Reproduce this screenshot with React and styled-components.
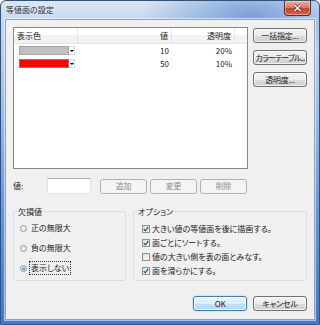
import styled, { createGlobalStyle } from "styled-components";

const textColor = "#1a1a1a";
const disabledText = "#8b8b8b";
const faceColor = "#f0f0f0";
const groupBorder = "#d5dfe5";

const GlobalStyle = createGlobalStyle`
  html, body { margin: 0; padding: 0; background: #ffffff; }
  body {
    font-family: "Noto Sans CJK JP", "Liberation Sans", sans-serif;
    font-size: 8px;
    font-feature-settings: "palt";
    color: ${textColor};
  }
  * { box-sizing: border-box; }
`;

const Window = styled.div`
  width: 320px;
  height: 325px;
  border: 1px solid #30527f;
  border-radius: 6px 6px 0 0;
  padding: 0 4px 4px;
  display: flex;
  flex-direction: column;
  background:
    radial-gradient(ellipse 110px 45px at 250px 14px, rgba(70, 120, 200, 0.6), rgba(70, 120, 200, 0) 100%),
    linear-gradient(to bottom, #dbe6f3 0, #c6d7ec 20px, #a9c4e6 90px, #6e98d6 200px, #4577c8 100%);
`;

const TitleBar = styled.div`
  height: 18px;
  display: flex;
  justify-content: space-between;
  align-items: flex-start;
  padding: 0 4px 0 1px;
`;

const Caption = styled.span`
  margin-top: 4px;
  font-size: 8px;
  line-height: 10px;
  color: #1e2a3a;
  text-shadow: 0 0 4px rgba(255, 255, 255, 0.9);
`;

const CloseButton = styled.div`
  width: 27px;
  height: 15px;
  border: 1px solid #6d2a22;
  border-top: none;
  border-radius: 0 0 4px 4px;
  background: linear-gradient(to bottom, #e9a99c 0, #d9806f 45%, #c2412c 55%, #cf6a4d 100%);
  box-shadow: inset 0 0 0 1px rgba(255, 255, 255, 0.35);
  display: flex;
  align-items: center;
  justify-content: center;
`;

const Client = styled.div`
  flex: 1;
  background: ${faceColor};
  border: 1px solid #8ea3bf;
  box-shadow: 0 0 0 1px rgba(255, 255, 255, 0.55);
  padding: 7px 7px 0;
  display: flex;
  flex-direction: column;
`;

const TopSection = styled.div`
  display: flex;
  gap: 5px;
`;

const ListBox = styled.div`
  width: 235px;
  height: 142px;
  border: 1px solid #828790;
  background: #ffffff;
`;

const cols = "64px 94px 63px 1fr";

const HeaderRow = styled.div`
  display: grid;
  grid-template-columns: ${cols};
  height: 16px;
  background: linear-gradient(to bottom, #ffffff 0, #ffffff 50%, #f3f4f6 50%, #eef0f3 100%);
  border-bottom: 1px solid #e4e6ea;
`;

const HeaderCell = styled.div`
  display: flex;
  align-items: center;
  justify-content: ${(p) => (p.$right ? "flex-end" : "flex-start")};
  padding: 0 3px;
  border-right: ${(p) => (p.$last ? "none" : "1px solid #e3e5e8")};
  line-height: 10px;
`;

const DataRow = styled.div`
  display: grid;
  grid-template-columns: ${cols};
  height: 13px;
`;

const Cell = styled.div`
  display: flex;
  align-items: center;
  justify-content: ${(p) => (p.$right ? "flex-end" : "flex-start")};
  padding: ${(p) => (p.$right ? "0 3px 0 0" : "0 0 0 5px")};
  line-height: 10px;
`;

const ColorPicker = styled.div`
  display: flex;
  height: 9px;
  width: 56px;
`;

const Swatch = styled.div`
  flex: 1;
  background: ${(p) => p.$color};
  border: 1px solid ${(p) => p.$border};
`;

const DropArrow = styled.div`
  width: 6px;
  background: #ffffff;
  border: 1px solid #d8d8d8;
  border-left: none;
  display: flex;
  align-items: center;
  justify-content: center;
  &::after {
    content: "";
    border-left: 2px solid transparent;
    border-right: 2px solid transparent;
    border-top: 2px solid #000;
  }
`;

const SideButtons = styled.div`
  display: flex;
  flex-direction: column;
  gap: 7px;
  margin-top: 1px;
`;

const Button = styled.button`
  width: ${(p) => p.$w || 54}px;
  height: 15px;
  padding: 0;
  font: inherit;
  line-height: 10px;
  white-space: nowrap;
  overflow: hidden;
  letter-spacing: ${(p) => (p.$tight ? "-0.9px" : "-0.2px")};
  color: ${textColor};
  border: 1px solid #707070;
  border-radius: 3px;
  background: linear-gradient(to bottom, #f2f2f2 0, #ebebeb 50%, #dddddd 50%, #cfcfcf 100%);
  box-shadow: inset 0 0 0 1px rgba(255, 255, 255, 0.7);
  &:disabled {
    color: ${disabledText};
    border-color: #adb2b5;
    background: #f4f4f4;
    box-shadow: none;
  }
`;

const DefaultButton = styled(Button)`
  border-color: #3c7fb1;
  background: linear-gradient(to bottom, #eaf6fd 0, #d9f0fc 50%, #bee6fd 50%, #a7d9f5 100%);
  box-shadow: inset 0 0 0 1px rgba(255, 255, 255, 0.8), 0 0 2px rgba(60, 127, 177, 0.4);
`;

const ValueRow = styled.div`
  display: flex;
  align-items: center;
  margin-top: 9px;
  height: 16px;
`;

const ValueLabel = styled.span`
  width: 34px;
  line-height: 10px;
`;

const ValueInput = styled.div`
  width: 44px;
  height: 16px;
  background: #ffffff;
  border: 1px solid #e2e3ea;
  border-top-color: #abadb3;
  margin-right: 9px;
`;

const ActionButtons = styled.div`
  display: flex;
  gap: 3px;
`;

const GroupRow = styled.div`
  display: flex;
  gap: 7px;
  margin-top: 12px;
`;

const Group = styled.fieldset`
  margin: 0;
  width: ${(p) => p.$w}px;
  min-width: 0;
  border: 1px solid ${groupBorder};
  border-radius: 3px;
  padding: ${(p) => p.$pad};
  display: flex;
  flex-direction: column;
  gap: ${(p) => p.$gap}px;
`;

const Legend = styled.legend`
  padding: 0 1px;
  margin-left: ${(p) => p.$shift}px;
  line-height: 11px;
`;

const OptionRow = styled.label`
  display: flex;
  align-items: center;
  gap: ${(p) => p.$gap}px;
  height: 12px;
  line-height: 10px;
  white-space: nowrap;
`;

const Radio = styled.span`
  width: 7px;
  height: 7px;
  border-radius: 50%;
  border: 1px solid #9a9a9a;
  background: radial-gradient(circle at 50% 50%, #f6f6f6 0, #dcdcdc 100%);
  display: flex;
  align-items: center;
  justify-content: center;
  &::after {
    content: "";
    width: 3px;
    height: 3px;
    border-radius: 50%;
    background: ${(p) => (p.$on ? "radial-gradient(circle at 40% 35%, #8fd0f7, #1a5fa8)" : "transparent")};
  }
`;

const FocusText = styled.span`
  outline: ${(p) => (p.$focus ? "1px dotted #333" : "none")};
  outline-offset: 1px;
`;

const CheckBox = styled.span`
  width: 8px;
  height: 8px;
  border: 1px solid #8f8f8f;
  background: linear-gradient(135deg, #dcdcdc, #fafafa);
  display: flex;
  align-items: center;
  justify-content: center;
`;

const Footer = styled.div`
  display: flex;
  justify-content: flex-end;
  gap: 6px;
  margin-top: 15px;
`;

const Check = () => (
  <svg width="6" height="6" viewBox="0 0 6 6">
    <path d="M0.8 3.2 L2.3 4.8 L5.3 0.8" fill="none" stroke="#1d4f91" strokeWidth="1.2" />
  </svg>
);

const rows = [
  { color: "#c0c0c0", border: "#a8a8a8", value: 10, alpha: "20%" },
  { color: "#ff0000", border: "#c86060", value: 50, alpha: "10%" },
];

const radios = [
  { label: "正の無限大" },
  { label: "負の無限大" },
  { label: "表示しない", on: true },
];

const options = [
  { label: "大きい値の等値面を後に描画する。", on: true },
  { label: "面ごとにソートする。", on: true },
  { label: "値の大きい側を表の面とみなす。", on: false },
  { label: "面を滑らかにする。", on: true },
];

const App = () => {
  return (
    <>
      <GlobalStyle />
      <Window>
        <TitleBar>
          <Caption>等値面の設定</Caption>
          <CloseButton>
            <svg width="9" height="8" viewBox="0 0 9 8">
              <path d="M1.5 1 L7.5 7 M7.5 1 L1.5 7" stroke="#5a1d15" strokeWidth="2.6" />
              <path d="M1.5 1 L7.5 7 M7.5 1 L1.5 7" stroke="#ffffff" strokeWidth="1.5" />
            </svg>
          </CloseButton>
        </TitleBar>
        <Client>
          <TopSection>
            <ListBox>
              <HeaderRow>
                <HeaderCell>表示色</HeaderCell>
                <HeaderCell $right>値</HeaderCell>
                <HeaderCell $right>透明度</HeaderCell>
                <HeaderCell $last />
              </HeaderRow>
              {rows.map((r) => (
                <DataRow key={r.value}>
                  <Cell>
                    <ColorPicker>
                      <Swatch $color={r.color} $border={r.border} />
                      <DropArrow />
                    </ColorPicker>
                  </Cell>
                  <Cell $right>{r.value}</Cell>
                  <Cell $right>{r.alpha}</Cell>
                  <Cell />
                </DataRow>
              ))}
            </ListBox>
            <SideButtons>
              <Button>一括指定...</Button>
              <Button $tight>カラーテーブル...</Button>
              <Button>透明度...</Button>
            </SideButtons>
          </TopSection>

          <ValueRow>
            <ValueLabel>値:</ValueLabel>
            <ValueInput />
            <ActionButtons>
              <Button $w={47} disabled>追加</Button>
              <Button $w={47} disabled>変更</Button>
              <Button $w={47} disabled>削除</Button>
            </ActionButtons>
          </ValueRow>

          <GroupRow>
            <Group $w={113} $pad="5px 6px 6px" $gap={8}>
              <Legend $shift={-3}>欠損値</Legend>
              {radios.map((r) => (
                <OptionRow key={r.label} $gap={4}>
                  <Radio $on={r.on} />
                  <FocusText $focus={r.on}>{r.label}</FocusText>
                </OptionRow>
              ))}
            </Group>
            <Group $w={174} $pad="6px 8px 3px" $gap={2}>
              <Legend $shift={-5}>オプション</Legend>
              {options.map((o) => (
                <OptionRow key={o.label} $gap={2}>
                  <CheckBox>{o.on && <Check />}</CheckBox>
                  <span>{o.label}</span>
                </OptionRow>
              ))}
            </Group>
          </GroupRow>

          <Footer>
            <DefaultButton>OK</DefaultButton>
            <Button>キャンセル</Button>
          </Footer>
        </Client>
      </Window>
    </>
  );
};

export default App;
